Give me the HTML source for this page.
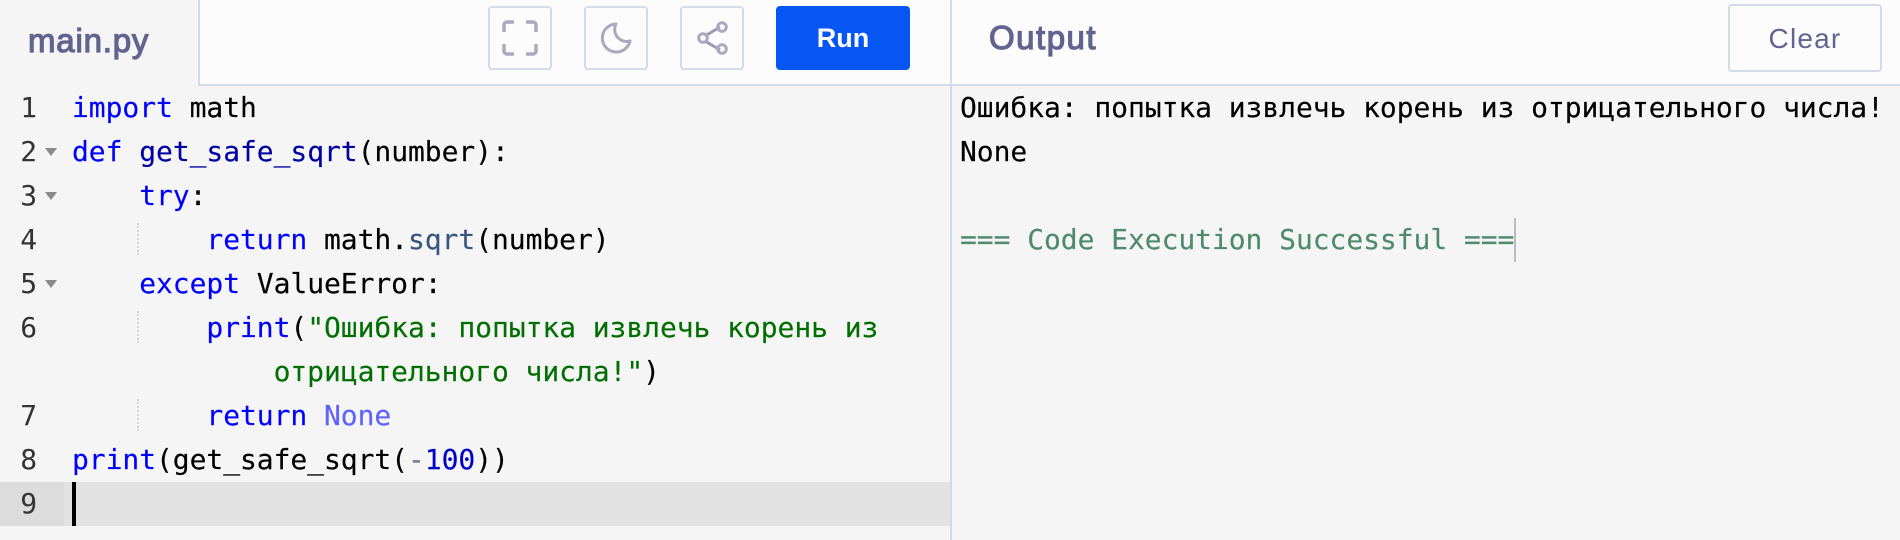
<!DOCTYPE html>
<html><head><meta charset="utf-8"><style>
html,body{margin:0;padding:0;width:1900px;height:540px;overflow:hidden;background:#f5f5f5}
body{position:relative;font-family:"DejaVu Sans Mono","Liberation Mono",monospace;font-size:28px;color:#000;letter-spacing:-.06px}
div{position:absolute;box-sizing:border-box}
.l{left:72px;height:44px;line-height:44px;white-space:pre;-webkit-text-stroke:.15px}
.o{left:960px;height:44px;line-height:44px;white-space:pre;-webkit-text-stroke:.15px}
.n{left:0;width:37px;text-align:right;height:44px;line-height:44px;color:#333}
.f{left:45px;width:0;height:0;border-left:6px solid transparent;border-right:6px solid transparent;border-top:8px solid #8a8a8a}
.g{left:137px;width:0;height:32px;border-left:2px dotted #d4d4d4}
.b{top:6px;width:64px;height:64px;border:2px solid #d3dbe8;border-radius:4px;background:#fcfcfc}
.h{font-family:"Liberation Sans",sans-serif;color:#60648f;letter-spacing:0;white-space:pre}
.k{color:#00f}.d{color:#0000a2}.s{color:#026f02}.m{color:#3a5580}.c{color:#5c63ff}
</style></head><body>
<div style="left:0;top:0;width:1900px;height:86px;background:#fcfcfc;border-bottom:2px solid #d3dbe8"></div>
<div style="left:0;top:0;width:200px;height:86px;background:#f5f5f5;border-right:2px solid #d3dbe8;border-bottom:2px solid #f5f5f5"></div>
<div style="left:198px;top:84px;width:2px;height:2px;background:#d3dbe8"></div>
<div style="left:950px;top:0;width:2px;height:540px;background:#d3dbe8"></div>
<div class="h" style="left:28px;top:18px;line-height:46px;font-size:33px;letter-spacing:.8px;-webkit-text-stroke:1.2px #60648f">main.py</div>

<div class="b" style="left:488px"><svg width="60" height="60" style="display:block"><path d="M14 24V17a3 3 0 0 1 3-3h7M36 14h7a3 3 0 0 1 3 3v7M46 36v7a3 3 0 0 1-3 3h-7M24 46h-7a3 3 0 0 1-3-3v-7" fill="none" stroke="#a9a9c0" stroke-width="3.5"/></svg></div>
<div class="b" style="left:584px"><svg width="60" height="60" style="display:block"><path d="M30 16a14 14 0 1 0 14 17a12 12 0 0 1-14-17z" fill="none" stroke="#a9a9c0" stroke-width="3" stroke-linejoin="round"/></svg></div>
<div class="b" style="left:680px"><svg width="60" height="60" style="display:block"><path d="M23 28l15-9M23 33l15 9" stroke="#9a9ab4" stroke-width="3"/><circle cx="21" cy="30" r="4.300" fill="none" stroke="#a9a9c0" stroke-width="3"/><circle cx="40" cy="19" r="4.300" fill="none" stroke="#a9a9c0" stroke-width="3"/><circle cx="40" cy="41" r="4.300" fill="none" stroke="#a9a9c0" stroke-width="3"/></svg></div>
<div style="left:776px;top:6px;width:134px;height:64px;background:#0556f3;border-radius:4px;color:#fff;font:700 27px/64px 'Liberation Sans',sans-serif;text-align:center;letter-spacing:0">Run</div>

<div class="h" style="left:989px;top:15px;line-height:46px;font-size:33px;letter-spacing:1.500px;-webkit-text-stroke:1.200px #60648f">Output</div>
<div class="h" style="left:1728px;top:4px;width:154px;height:68px;border:2px solid #d3dbe8;border-radius:4px;text-align:center;line-height:66px;font-size:28px;letter-spacing:1.200px">Clear</div>

<div style="left:0;top:482px;width:950px;height:44px;background:#e2e2e2"></div>
<div style="left:0;top:482px;width:64px;height:44px;background:#dcdcdc"></div>
<div style="left:72px;top:482px;width:4px;height:44px;background:#000"></div>

<div class="n" style="top:86px">1</div>
<div class="n" style="top:130px">2</div><div class="f" style="top:148px"></div>
<div class="n" style="top:174px">3</div><div class="f" style="top:192px"></div>
<div class="n" style="top:218px">4</div>
<div class="n" style="top:262px">5</div><div class="f" style="top:280px"></div>
<div class="n" style="top:306px">6</div>
<div class="n" style="top:394px">7</div>
<div class="n" style="top:438px">8</div>
<div class="n" style="top:482px">9</div>

<div class="g" style="top:223px"></div>
<div class="g" style="top:311px"></div>
<div class="g" style="top:399px"></div>

<div class="l" style="top:86px"><span class="k">import</span> math</div>
<div class="l" style="top:130px"><span class="k">def</span> <span class="d">get_safe_sqrt</span>(number):</div>
<div class="l" style="top:174px">    <span class="k">try</span>:</div>
<div class="l" style="top:218px">        <span class="k">return</span> math.<span class="m">sqrt</span>(number)</div>
<div class="l" style="top:262px">    <span class="k">except</span> ValueError:</div>
<div class="l" style="top:306px">        <span class="k">print</span>(<span class="s">"Ошибка: попытка извлечь корень из</span></div>
<div class="l" style="top:350px">            <span class="s">отрицательного числа!"</span>)</div>
<div class="l" style="top:394px">        <span class="k">return</span> <span class="c">None</span></div>
<div class="l" style="top:438px"><span class="k">print</span>(get_safe_sqrt(<span style="color:#6a7a90">-</span><span style="color:#0000cd">100</span>))</div>

<div class="o" style="top:86px">Ошибка: попытка извлечь корень из отрицательного числа!</div>
<div class="o" style="top:130px">None</div>
<div class="o" style="top:218px;color:#4e8a6c">=== Code Execution Successful ===</div>
<div style="left:1514px;top:218px;width:2px;height:44px;background:#bdbdbd"></div>
</body></html>
